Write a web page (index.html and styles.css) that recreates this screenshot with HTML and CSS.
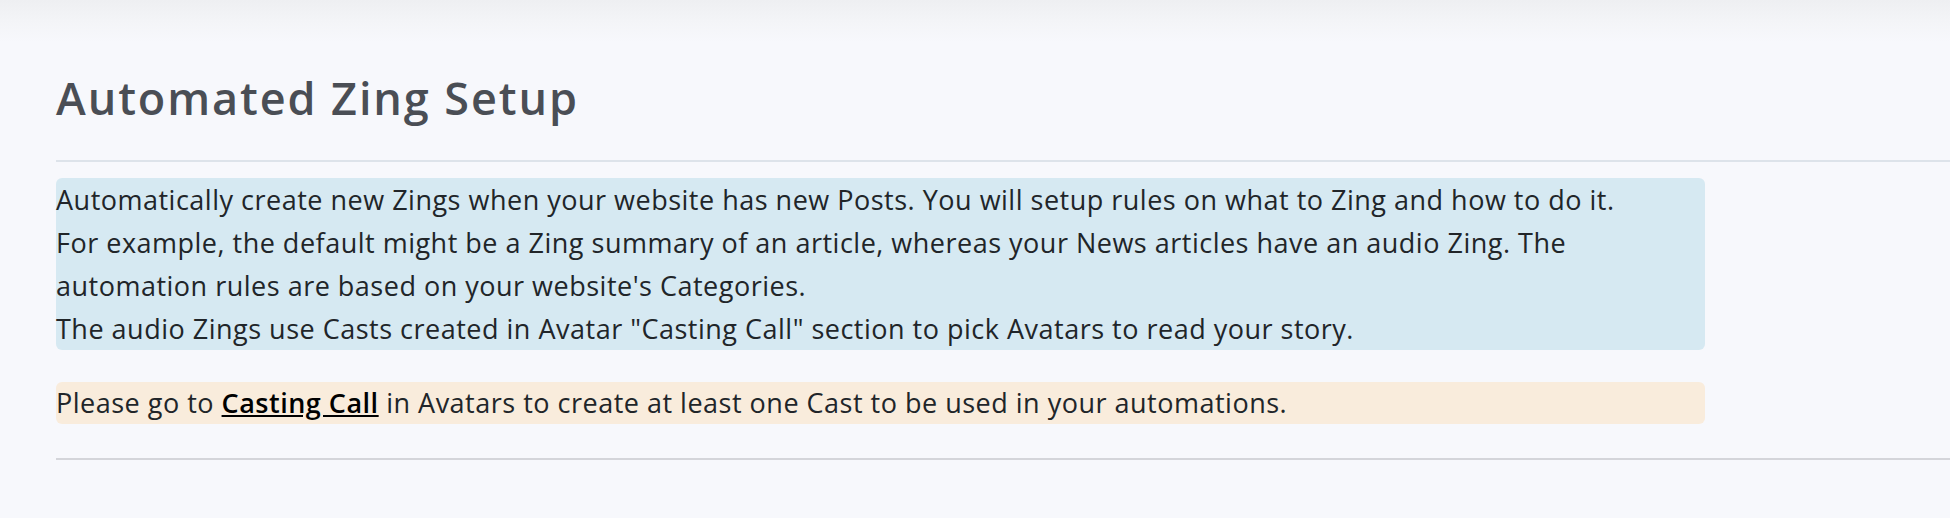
FILE: index.html
```html
<!DOCTYPE html>
<html lang="en">
<head>
<meta charset="utf-8">
<title>Automated Zing Setup</title>
<link rel="stylesheet" href="styles.css">
</head>
<body>
<div class="page">
  <h1 class="title">Automated Zing Setup</h1>
  <hr class="rule">
  <div class="notice notice-info">
    <div class="line">Automatically create new Zings when your website has new Posts. You will setup rules on what to Zing and how to do it.</div>
    <div class="line">For example, the default might be a Zing summary of an article, whereas your News articles have an audio Zing. The</div>
    <div class="line">automation rules are based on your website's Categories.</div>
    <div class="line">The audio Zings use Casts created in Avatar "Casting Call" section to pick Avatars to read your story.</div>
  </div>
  <div class="notice notice-warn">
    <div class="line">Please go to <a class="link" href="#">Casting Call</a> in Avatars to create at least one Cast to be used in your automations.</div>
  </div>
  <hr class="rule rule-bottom">
</div>
</body>
</html>
```
FILE: styles.css
```css
html, body {
  margin: 0;
  padding: 0;
}
body {
  background: linear-gradient(to bottom, #eeeff2 0px, #f3f4f7 20px, #f7f8fc 42px, #f7f8fc 100%);
  min-height: 518px;
  font-family: "Open Sans", "Noto Sans", sans-serif;
  color: #212529;
}
.page {
  padding: 66px 0 0 56px;
}
.title {
  margin: 0;
  font-size: 45px;
  font-weight: 600;
  line-height: 64px;
  color: #4a4e55;
  letter-spacing: 1.9px;
}
.rule {
  border: 0;
  height: 2px;
  background: #dde3ea;
  margin: 30px 0 16px 0;
}
.rule-bottom {
  background: #d4d5da;
  height: 2px;
  margin: 34px 0 0 0;
}
.notice {
  width: 1649px;
  border-radius: 6px;
  font-size: 27px;
  line-height: 43px;
  letter-spacing: 0.5px;
}
.line {
  white-space: nowrap;
}
.notice-info {
  background: #d6e9f2;
}
.notice-warn {
  background: #f9ecdc;
  margin-top: 32px;
  line-height: 42px;
}
.link {
  color: #000;
  font-weight: 600;
  text-decoration: underline;
}
```
